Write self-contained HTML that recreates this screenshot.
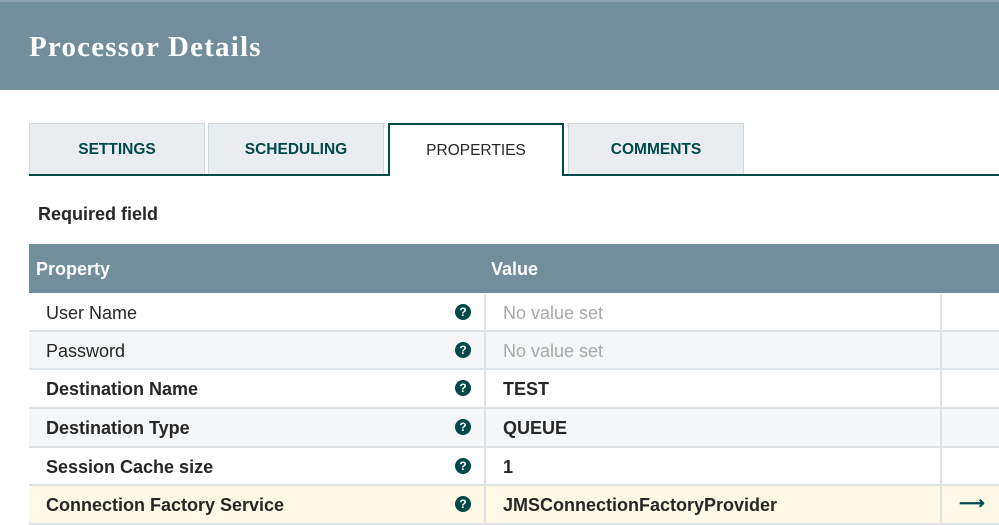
<!DOCTYPE html><html><head><style>
*{margin:0;padding:0;box-sizing:border-box}
body{width:999px;height:525px;overflow:hidden;background:#fff;font-family:"Liberation Sans",sans-serif;position:relative}
.hd{position:absolute;left:0;top:0;width:999px;height:90px;background:#728e9b;border-top:2px solid #8aa1ab}
.hd h1{position:absolute;left:29px;top:29px;font:bold 29px "Liberation Serif",serif;color:#fff;letter-spacing:1.2px}
.tab{position:absolute;top:123px;height:52px;background:#e9edef;border:1px solid #cfd9dc;border-bottom:none;color:#004849;font-weight:bold;font-size:15.5px;text-align:center;line-height:52px}
.line{position:absolute;top:174px;height:2px;background:#004849}
.act{position:absolute;left:388px;top:123px;width:176px;height:53px;background:#fff;border:2px solid #004849;border-bottom:none;text-align:center;line-height:52px;font-size:15.5px;color:#262626}
.req{position:absolute;left:38px;top:204px;font-weight:bold;font-size:18px;color:#262626}
.th{position:absolute;left:29px;top:244px;width:970px;height:49px;background:#728e9b;color:#fff;font-weight:bold;font-size:18px}
.th span{position:absolute;top:15px}
.row{position:absolute;left:29px;width:970px;border-bottom:2px solid #dde3e6;font-size:18px;color:#262626}
.row .n{position:absolute;left:17px;top:9px}
.row .q{position:absolute;left:426px;top:10px;width:16px;height:16px;border-radius:50%;background:#004849;color:#fff;font-size:12px;font-weight:bold;text-align:center;line-height:16px}
.row .v{position:absolute;left:474px;top:9px}
.row .c1{position:absolute;left:455px;top:0;bottom:0;width:2px;background:#dde3e6}
.row .c2{position:absolute;left:911px;top:0;bottom:0;width:2px;background:#dde3e6}
.b{font-weight:bold}
.g{color:#a8a8a8}
</style></head><body>
<div class="hd"><h1>Processor Details</h1></div>
<div class="tab" style="left:29px;width:176px">SETTINGS</div>
<div class="tab" style="left:208px;width:176px">SCHEDULING</div>
<div class="tab" style="left:568px;width:176px">COMMENTS</div>
<div class="line" style="left:29px;width:360px"></div>
<div class="line" style="left:563px;width:436px"></div>
<div class="act">PROPERTIES</div>
<div class="req">Required field</div>
<div class="th"><span style="left:7px">Property</span><span style="left:462px">Value</span></div>
<div class="row" style="top:294px;height:38px;background:#fff"><span class="n">User Name</span><span class="q">?</span><span class="c1"></span><span class="v g">No value set</span><span class="c2"></span></div>
<div class="row" style="top:332px;height:38px;background:#f4f6f7"><span class="n">Password</span><span class="q">?</span><span class="c1"></span><span class="v g">No value set</span><span class="c2"></span></div>
<div class="row b" style="top:370px;height:39px;background:#fff"><span class="n">Destination Name</span><span class="q">?</span><span class="c1"></span><span class="v">TEST</span><span class="c2"></span></div>
<div class="row b" style="top:409px;height:39px;background:#f4f6f7"><span class="n">Destination Type</span><span class="q">?</span><span class="c1"></span><span class="v">QUEUE</span><span class="c2"></span></div>
<div class="row b" style="top:448px;height:38px;background:#fff"><span class="n">Session Cache size</span><span class="q">?</span><span class="c1"></span><span class="v">1</span><span class="c2"></span></div>
<div class="row b" style="top:486px;height:39px;background:#fdf9e6"><span class="n">Connection Factory Service</span><span class="q">?</span><span class="c1"></span><span class="v">JMSConnectionFactoryProvider</span><span class="c2"></span><span style="position:absolute;left:930px;top:7px;color:#004849;font-size:18px">⟶</span></div>
</body></html>
